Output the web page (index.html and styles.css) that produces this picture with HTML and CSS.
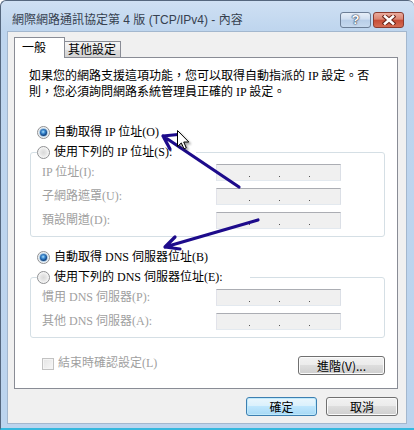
FILE: index.html
```html
<!DOCTYPE html>
<html lang="zh-Hant">
<head>
<meta charset="utf-8">
<title>網際網路通訊協定第 4 版 (TCP/IPv4) - 內容</title>
<link rel="stylesheet" href="styles.css">
</head>
<body>
<div class="window">
  <div class="titlebar">
    <span class="title">網際網路通訊協定第 4 版 (TCP/IPv4) - 內容</span>
    <div class="caption-btns">
      <span class="cbtn help">?</span>
      <span class="cbtn close">
        <svg width="14" height="10" viewBox="0 0 14 10">
          <path d="M3 1.5 L11 8.5 M11 1.5 L3 8.5" stroke="#6a2419" stroke-width="4.6" stroke-linecap="square"/>
          <path d="M3 1.5 L11 8.5 M11 1.5 L3 8.5" stroke="#fff" stroke-width="2.6" stroke-linecap="square"/>
        </svg>
      </span>
    </div>
  </div>
  <div class="client">
    <div class="tabs">
      <div class="tab active">一般</div>
      <div class="tab">其他設定</div>
    </div>
    <div class="panel">
      <p class="desc">如果您的網路支援這項功能，您可以取得自動指派的 IP 設定。否<br>則，您必須詢問網路系統管理員正確的 IP 設定。</p>
      <div class="opt first"><span class="radio on"></span><span>自動取得 IP 位址(O)</span></div>
      <fieldset class="group">
        <legend class="legend-ip"><span class="opt in-legend"><span class="radio"></span><span>使用下列的 IP 位址(S):</span></span></legend>
        <div class="fields">
          <span class="lbl">IP 位址(I):</span>
          <div class="ipbox"><span class="dot"></span><span class="dot"></span><span class="dot"></span></div>
          <span class="lbl">子網路遮罩(U):</span>
          <div class="ipbox"><span class="dot"></span><span class="dot"></span><span class="dot"></span></div>
          <span class="lbl">預設閘道(D):</span>
          <div class="ipbox"><span class="dot"></span><span class="dot"></span><span class="dot"></span></div>
        </div>
      </fieldset>
      <div class="opt second"><span class="radio on"></span><span>自動取得 DNS 伺服器位址(B)</span></div>
      <fieldset class="group">
        <legend class="legend-dns"><span class="opt in-legend"><span class="radio"></span><span>使用下列的 DNS 伺服器位址(E):</span></span></legend>
        <div class="fields">
          <span class="lbl">慣用 DNS 伺服器(P):</span>
          <div class="ipbox"><span class="dot"></span><span class="dot"></span><span class="dot"></span></div>
          <span class="lbl">其他 DNS 伺服器(A):</span>
          <div class="ipbox"><span class="dot"></span><span class="dot"></span><span class="dot"></span></div>
        </div>
      </fieldset>
      <div class="bottom-row">
        <div class="check"><span class="box"></span><span>結束時確認設定(L)</span></div>
        <button class="btn adv">進階(V)...</button>
      </div>
    </div>
    <div class="actions">
      <button class="btn ok">確定</button>
      <button class="btn cancel">取消</button>
    </div>
  </div>
  <svg class="annot" width="414" height="430" viewBox="0 0 414 430">
    <defs>
      <filter id="sh" x="-50%" y="-50%" width="200%" height="200%">
        <feDropShadow dx="2" dy="2" stdDeviation="1.3" flood-color="#000" flood-opacity="0.35"/>
      </filter>
    </defs>
    <g stroke="#1d0b8b" stroke-width="3.2" stroke-linecap="round" stroke-linejoin="round" fill="none">
      <path d="M239 187 L163 136 M163 136 L178 134.5 M163 136 L170 149"/>
      <path d="M258 220 L165 247 M165 247 L175 237 M165 247 L180 249"/>
    </g>
    <g transform="translate(177.5 130.5)" filter="url(#sh)">
      <path d="M0 0 V16 L3.8 12.4 L6.5 18.3 L8.8 17.3 L6.2 11.5 H11.3 Z" fill="#fff" stroke="#000" stroke-width="1"/>
    </g>
  </svg>
</div>
</body>
</html>
```
FILE: styles.css
```css
* { box-sizing: border-box; }
html, body { margin: 0; background: #fff; }
body {
  font: 12px/16px "Liberation Serif", "Noto Sans CJK TC", serif;
  color: #000;
}

.window {
  position: relative;
  width: 414px;
  height: 430px;
  display: flex;
  flex-direction: column;
  background: linear-gradient(to bottom, #cfe0f3 0, #bed5ee 30px, #bcd4ee 100%);
  border-left: 1px solid #55677e;
  border-top: 1px solid #55677e;
  border-bottom: 2px solid #35b8de;
  border-radius: 6px 6px 0 0;
  padding: 0 7px 4px 6px;
}

.titlebar {
  height: 30px;
  flex: none;
  display: flex;
  align-items: flex-start;
  padding: 11px 3px 0 5px;
}
.title {
  font: 12px/16px "Liberation Sans", "Noto Sans CJK TC", sans-serif;
  color: #36414f;
  white-space: nowrap;
}
.caption-btns {
  margin-left: auto;
  display: flex;
  gap: 2px;
}
.cbtn {
  width: 31px;
  height: 16px;
  border: 1px solid;
  border-radius: 3px;
  display: grid;
  place-items: center;
}
.help {
  border-color: #6c7e96;
  background: linear-gradient(#e6eef8, #cfdef0 45%, #b7cde7 50%, #c6d9ee);
  color: #fff;
  font: bold 13px/14px "Liberation Sans", sans-serif;
  text-shadow: 0 0 1px #2e3f57, 0 0 1px #2e3f57, 0 0 2px #2e3f57;
}
.close {
  border-color: #8b3b2f;
  background: linear-gradient(#eaab9d, #da8471 45%, #c64b35 50%, #d56c53);
}
.close svg { display: block; }

.client {
  flex: 1;
  display: flex;
  flex-direction: column;
  background: #f0f0f0;
  border: 1px solid #a3b7ce;
  padding: 5px 8px 7px 6px;
}

.tabs {
  display: flex;
  align-items: flex-end;
  height: 21px;
  margin-bottom: -1px;
  position: relative;
  z-index: 1;
  font: 12px/14px "Noto Sans CJK TC", sans-serif;
}
.tab {
  height: 16px;
  margin-bottom: 1px;
  border: 1px solid #898c95;
  border-left: 0;
  border-bottom: 0;
  padding: 0 4px 0 3px;
  background: linear-gradient(#f4f4f4, #ececec 50%, #dedede 50%, #d2d2d2);
  white-space: nowrap;
}
.tab.active {
  width: 51px;
  height: 21px;
  margin-bottom: 0;
  border-left: 1px solid #898c95;
  background: #fff;
  padding: 2px 0 0 7px;
}

.panel {
  flex: 1;
  display: flex;
  flex-direction: column;
  background: #fff;
  border: 1px solid #898c95;
  padding: 10px 12px 13px 14px;
}
.desc {
  margin: 0;
  line-height: 16px;
  white-space: nowrap;
}

.opt {
  display: flex;
  align-items: center;
  gap: 4px;
  height: 19px;
  line-height: 19px;
  padding-left: 8px;
  white-space: nowrap;
}
.opt.first { margin-top: 23px; }
.opt.second { margin-top: 11px; }
.opt.in-legend { padding-left: 0; }

.radio {
  flex: none;
  width: 13px;
  height: 13px;
  border-radius: 50%;
  border: 1px solid #8f9092;
  background: radial-gradient(circle at 50% 50%, #d9d9d9 0, #e6e6e6 3px, #f4f4f4 5px, #fdfdfd 6px);
  display: grid;
  place-items: center;
}
.radio.on::after {
  content: "";
  width: 7px;
  height: 7px;
  border-radius: 50%;
  background: radial-gradient(circle at 45% 40%, #b4e2fb 0, #4b98d9 1.5px, #1d5ea6 3px, #0d3a73 4px);
  box-shadow: 0 0 1px 0.5px #5fa3dc;
}

.group {
  margin: 1px 0 0 1px;
  padding: 0;
  border: 1px solid #d5dfe5;
  border-radius: 3px;
  min-width: 0;
}
.group legend {
  padding: 0;
  margin-left: 6px;
  height: 19px;
}
.legend-ip { width: 159px; }
.legend-dns { width: 213px; }

.fields {
  display: grid;
  grid-template-columns: 174px 125px;
  row-gap: 7px;
  align-items: center;
  padding: 2px 0 7px 11px;
}
.lbl {
  color: #a0a0a0;
  line-height: 17px;
  white-space: nowrap;
}
.ipbox {
  height: 17px;
  border: 1px solid;
  border-color: #abadb3 #dbdfe6 #e3e9ef #e2e3ea;
  background: #f0f0f0;
  display: flex;
  align-items: flex-end;
  gap: 29px;
  padding: 0 0 3px 32px;
}
.dot {
  width: 1px;
  height: 1px;
  background: #555;
}

.bottom-row {
  margin-top: 18px;
  display: flex;
  justify-content: space-between;
  align-items: flex-start;
  padding-left: 13px;
}
.check {
  display: flex;
  align-items: center;
  gap: 4px;
  height: 15px;
  line-height: 15px;
  color: #a0a0a0;
  white-space: nowrap;
}
.box {
  width: 12px;
  height: 12px;
  border: 1px solid #c2c2c2;
  background: linear-gradient(135deg, #e4e4e4, #f7f7f7);
  box-shadow: inset 0 0 0 1px #f4f4f4;
}

.btn {
  height: 19px;
  padding: 0;
  border: 1px solid #707070;
  border-radius: 3px;
  background: linear-gradient(#f2f2f2, #ebebeb 50%, #dddddd 50%, #cfcfcf);
  box-shadow: inset 0 0 0 1px #fbfbfb;
  font: 12px/17px "Noto Sans CJK TC", sans-serif;
  color: #000;
}
.adv { width: 87px; }

.actions {
  margin-top: 8px;
  display: flex;
  justify-content: flex-end;
  gap: 9px;
}
.ok {
  width: 71px;
  border-color: #3c7fb1;
  background: linear-gradient(#eaf6fd, #d9f0fc 50%, #bee6fd 50%, #a7d9f5);
  box-shadow: inset 0 0 0 1px #bfe9fb;
}
.cancel { width: 72px; }

.annot {
  position: absolute;
  left: -1px;
  top: -1px;
  pointer-events: none;
}
```
